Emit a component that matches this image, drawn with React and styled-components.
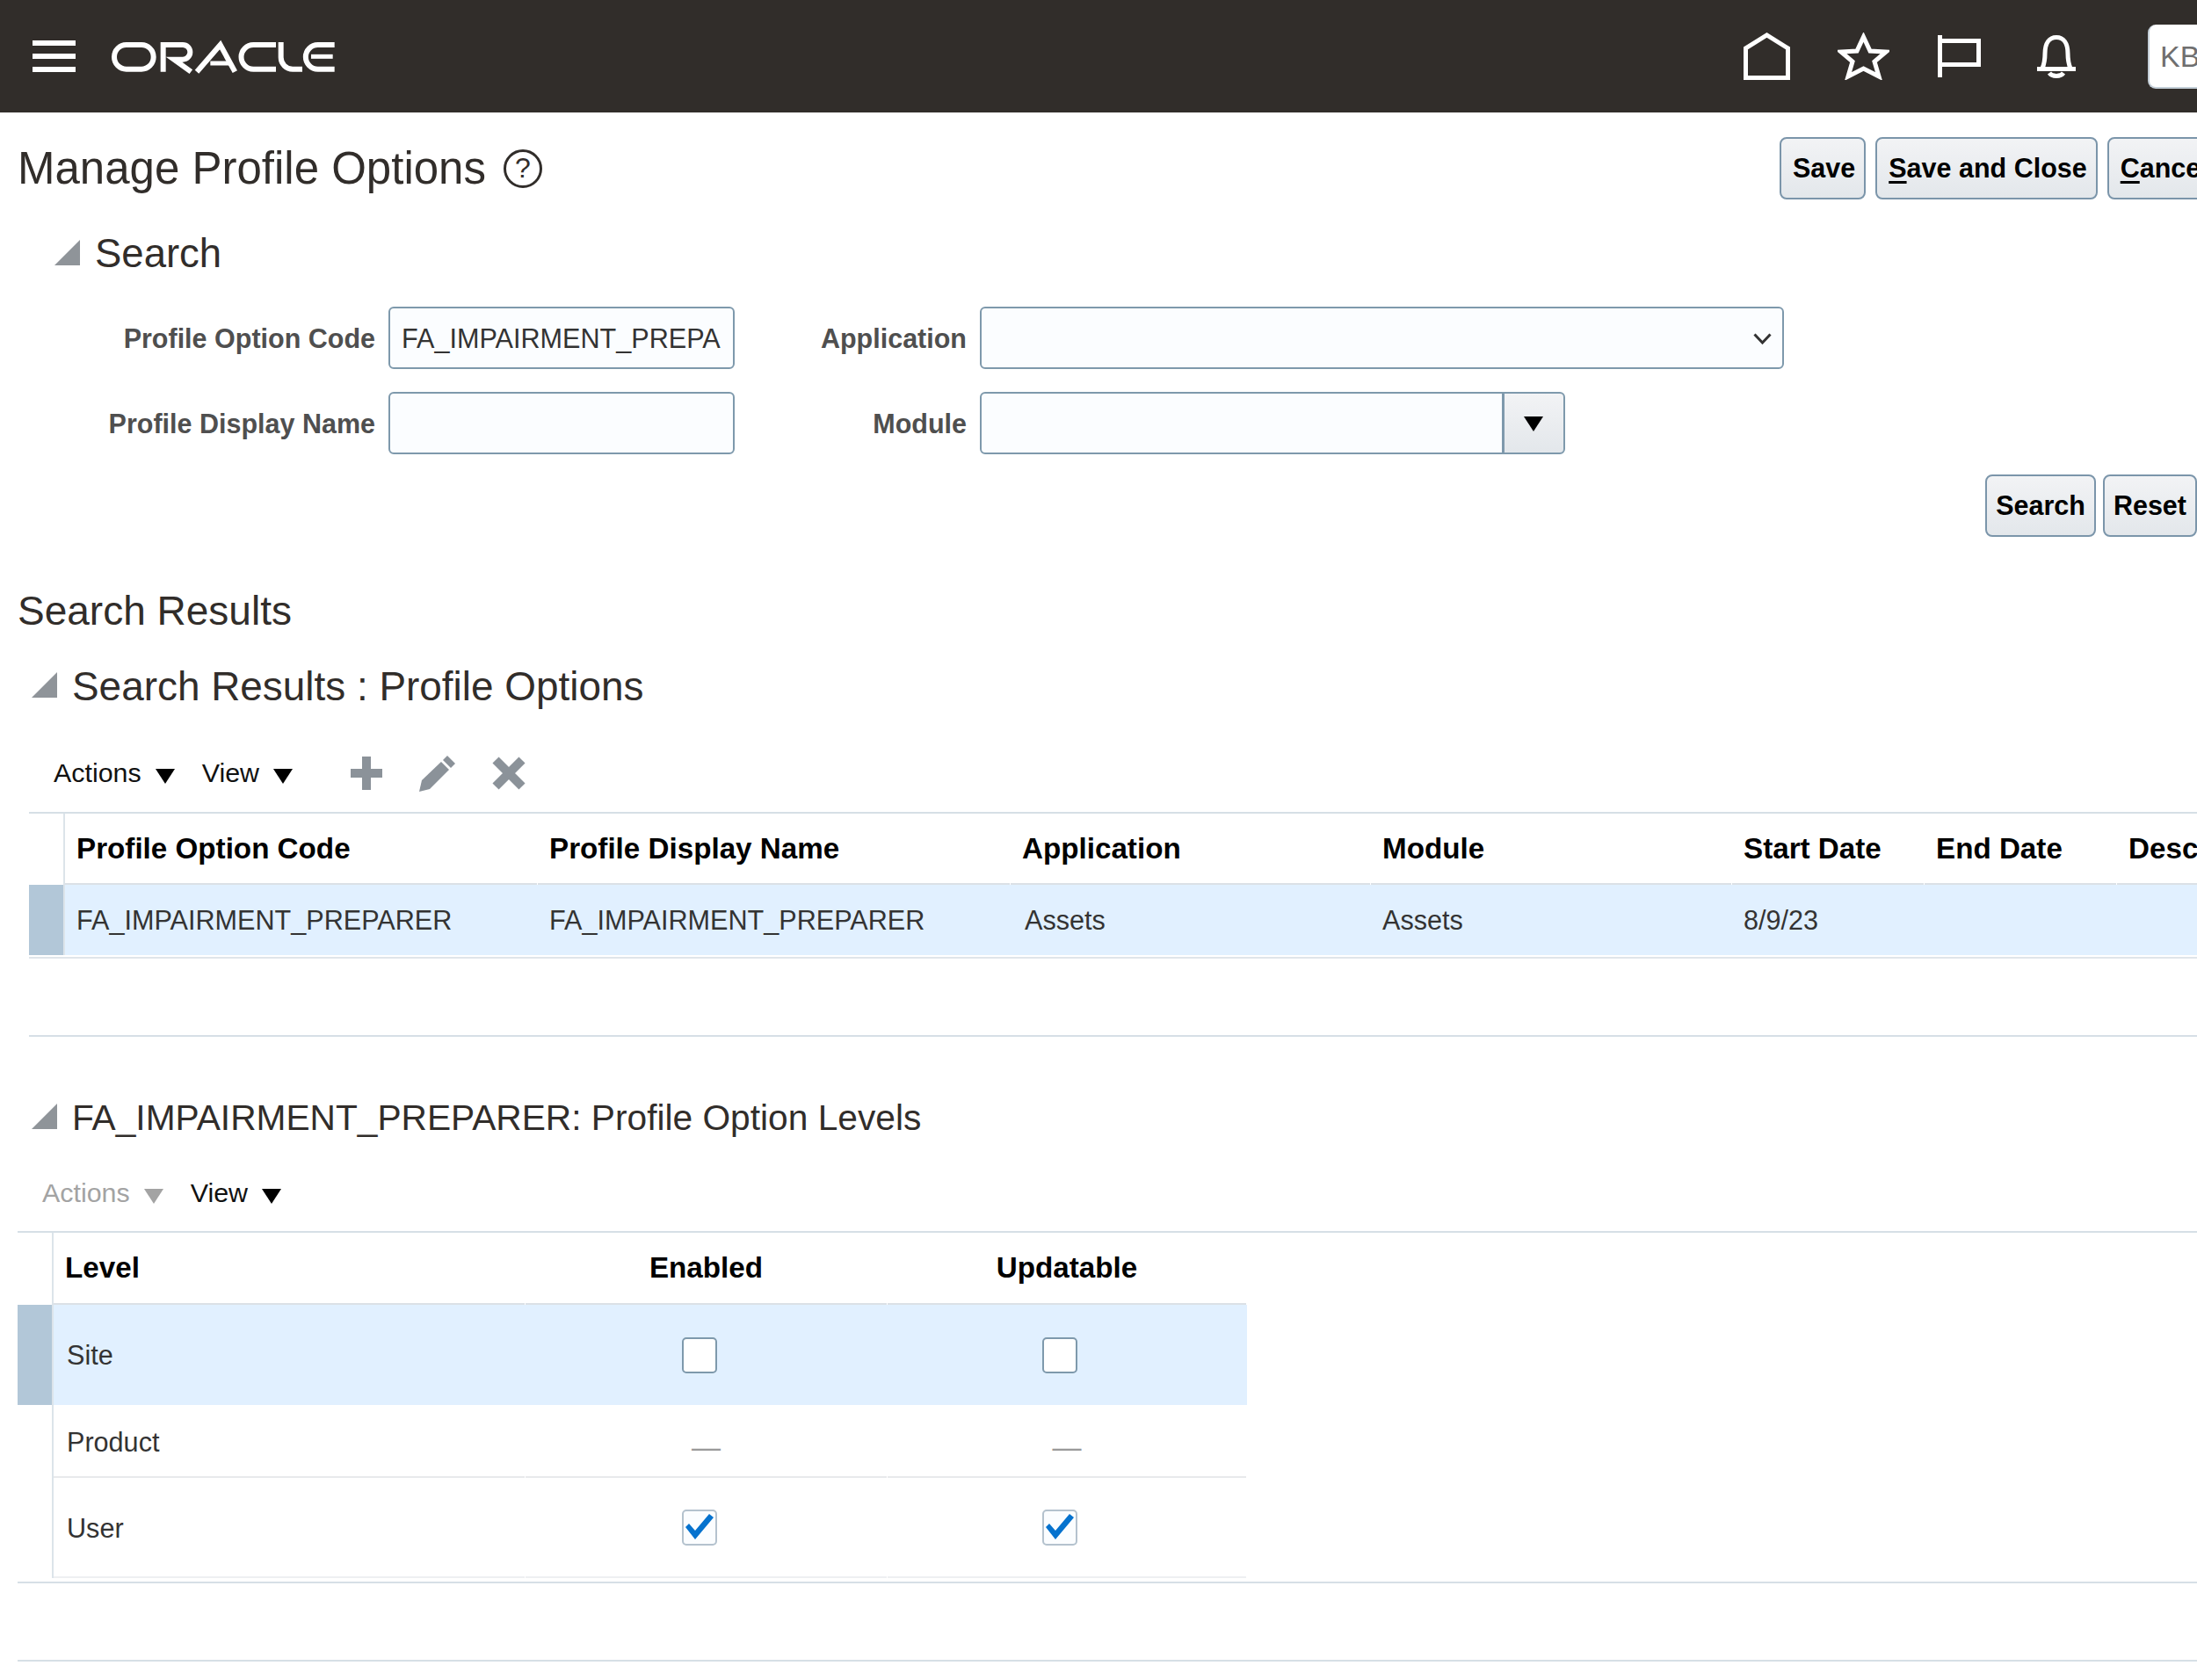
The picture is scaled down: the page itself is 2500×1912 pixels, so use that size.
import styled, { createGlobalStyle } from 'styled-components';

const GlobalStyle = createGlobalStyle`
  html, body {
    margin: 0;
    padding: 0;
    background: #ffffff;
  }
  * {
    box-sizing: border-box;
  }
`;

const Page = styled.div`
  width: 2500px;
  height: 1912px;
  overflow: hidden;
  font-family: "Liberation Sans", Arial, sans-serif;
  font-size: 30.6px;
  color: #333333;
`;

const TopBar = styled.header`
  height: 128px;
  background: #312d2a;
  display: flex;
  align-items: center;
  padding-left: 37px;
`;

const Hamburger = styled.div`
  width: 49px;
  height: 36px;
  margin-right: 34px;
  display: flex;
  flex-direction: column;
  justify-content: space-between;
  span {
    display: block;
    height: 6px;
    background: #ffffff;
  }
`;

const Logo = styled.svg`
  display: block;
  margin-top: 2px;
  fill: none;
  stroke: #ffffff;
  stroke-width: 18;
`;

const TopIcons = styled.nav`
  margin-left: auto;
  display: flex;
  align-items: center;
`;

const TopIcon = styled.svg`
  display: block;
  fill: none;
  stroke: #ffffff;
  stroke-width: 5;
  margin-right: ${(props) => props.$gap}px;
`;

const UserBadge = styled.div`
  width: 56px;
  height: 73px;
  background: #ffffff;
  border-radius: 9px 0 0 9px;
  border-bottom: 2px solid #c3ced7;
  border-left: 2px solid #c3ced7;
  padding-left: 12px;
  line-height: 72px;
  font-size: 34px;
  color: #6f6f6f;
  white-space: nowrap;
  overflow: hidden;
`;

const TitleRow = styled.div`
  margin-top: 28px;
  height: 71px;
  display: flex;
  align-items: center;
`;

const TitleBlock = styled.div`
  flex: 0 0 2025px;
  padding-left: 20px;
  display: flex;
  align-items: center;
`;

const PageTitle = styled.h1`
  margin: 0;
  font-size: 51px;
  line-height: 58px;
  font-weight: 400;
  color: #312d2a;
`;

const HelpMark = styled.span`
  width: 44px;
  height: 44px;
  margin-left: 20px;
  border: 3px solid #312d2a;
  border-radius: 50%;
  display: flex;
  align-items: center;
  justify-content: center;
  font-size: 32px;
  color: #312d2a;
`;

const ButtonGroup = styled.div`
  display: flex;
  gap: ${(props) => props.$gap}px;
  flex: none;
`;

const Button = styled.button`
  height: 71px;
  padding: 0 ${(props) => props.$pad || 10}px 0 ${(props) => props.$pad || 13}px;
  background: linear-gradient(#f2f3f5, #e3e7eb);
  border: 2px solid #7b95aa;
  border-radius: 8px;
  font-family: inherit;
  font-size: 30.5px;
  font-weight: 700;
  color: #000000;
  white-space: nowrap;
  flex: none;
  cursor: pointer;
  u {
    text-decoration-thickness: 3px;
    text-underline-offset: 4px;
  }
`;

const SectionHead = styled.div`
  display: flex;
  align-items: center;
  margin-top: ${(props) => props.$top}px;
  padding-left: ${(props) => props.$left}px;
  gap: 17px;
`;

const Disclosure = styled.svg`
  display: block;
  flex: none;
  fill: #8f9499;
  position: relative;
  top: -2px;
`;

const SectionTitle = styled.h2`
  margin: 0;
  font-size: ${(props) => props.$size}px;
  line-height: ${(props) => props.$line}px;
  font-weight: 400;
  color: #312d2a;
  white-space: nowrap;
`;

const FormGrid = styled.div`
  margin-top: 35px;
  display: grid;
  grid-template-columns: 427px 394px 249px auto;
  grid-auto-rows: 71px;
  column-gap: 15px;
  row-gap: 26px;
  align-items: center;
  justify-items: start;
`;

const Label = styled.label`
  justify-self: end;
  padding-top: 2px;
  font-weight: 700;
  font-size: 30.5px;
  color: #4f4f4f;
  white-space: nowrap;
`;

const TextInput = styled.input`
  width: ${(props) => props.$width}px;
  height: 71px;
  padding: 2px 13px 0;
  background: #fbfdff;
  border: 2px solid #7e99ac;
  border-radius: ${(props) => props.$radius || '6px'};
  font-family: inherit;
  font-size: 30.6px;
  color: #333333;
  outline: none;
`;

const SelectBox = styled.div`
  width: 915px;
  height: 71px;
  padding: 2px 12px 0 0;
  background: #fbfdff;
  border: 2px solid #7e99ac;
  border-radius: 6px;
  display: flex;
  align-items: center;
  justify-content: flex-end;
`;

const Combo = styled.div`
  display: flex;
`;

const ComboButton = styled.div`
  width: 70px;
  height: 71px;
  padding-right: 2px;
  background: linear-gradient(#f2f3f5, #e3e7eb);
  border: 2px solid #7e99ac;
  border-left-width: 1px;
  border-radius: 0 6px 6px 0;
  display: flex;
  align-items: center;
  justify-content: center;
`;

const SearchActions = styled.div`
  margin-top: 23px;
  display: flex;
  justify-content: flex-end;
`;

const Toolbar = styled.div`
  height: 46px;
  margin-top: ${(props) => props.$top}px;
  padding-left: ${(props) => props.$left}px;
  display: flex;
  align-items: center;
`;

const MenuItem = styled.span`
  display: flex;
  align-items: center;
  gap: 16px;
  margin-right: 31px;
  padding-bottom: 2px;
  font-size: 30.4px;
  color: ${(props) => (props.$disabled ? '#a3a3a3' : '#111111')};
`;

const Arrow = styled.svg`
  display: block;
  flex: none;
  fill: ${(props) => props.$color || '#000000'};
  position: relative;
  top: ${(props) => props.$shift || 4}px;
`;

const ToolIcon = styled.svg`
  display: block;
  flex: none;
  fill: #8b9299;
  stroke: #8b9299;
  margin-left: ${(props) => props.$gap}px;
`;

const Pane = styled.section`
  margin-left: ${(props) => props.$left}px;
  height: ${(props) => props.$height}px;
  margin-top: ${(props) => props.$top}px;
  border-top: 2px solid #d6dfe6;
  border-bottom: 2px solid #d6dfe6;
`;

const Row = styled.div`
  display: grid;
  grid-template-columns: ${(props) => props.$columns};
  height: ${(props) => props.$height}px;
  width: max-content;
  ${(props) => props.$selected && 'background: #e1f0ff;'}
  ${(props) => props.$ruled && `
    background-clip: content-box;
    padding-bottom: 2px;
    border-bottom: 2px solid #dfe5ea;
  `}
`;

const MarkerCell = styled.div`
  border-right: 2px solid #dce4ea;
  background: ${(props) => (props.$selected ? '#b2c7d8' : 'transparent')};
`;

const HeadCell = styled.div`
  padding: 0 13px;
  margin-right: 1px;
  display: flex;
  align-items: center;
  justify-content: ${(props) => (props.$center ? 'center' : 'flex-start')};
  font-size: 33.2px;
  font-weight: 700;
  color: #000000;
  white-space: nowrap;
  border-bottom: 2px solid #dbe1e6;
`;

const Cell = styled.div`
  padding-left: ${(props) => 13 + (props.$inset || 0)}px;
  margin-right: 1px;
  display: flex;
  align-items: center;
  justify-content: flex-start;
  white-space: nowrap;
  ${(props) => props.$rule && `
    padding-top: 3px;
    border-bottom: 2px solid ${props.$rule};
  `}
`;

const CheckCell = styled.div`
  padding-right: 16px;
  margin-right: 1px;
  display: flex;
  align-items: center;
  justify-content: center;
  ${(props) => props.$rule && `border-bottom: 2px solid ${props.$rule};`}
`;

const DashCell = styled.div`
  padding-top: 14px;
  margin-right: 1px;
  display: flex;
  align-items: center;
  justify-content: center;
  font-size: 33px;
  color: #999999;
  ${(props) => props.$rule && `border-bottom: 2px solid ${props.$rule};`}
`;

const CheckBox = styled.span`
  width: 40px;
  height: 41px;
  display: flex;
  align-items: center;
  justify-content: center;
  background: ${(props) => (props.$checked ? '#fbfdff' : '#ffffff')};
  border: 2px solid ${(props) => (props.$checked ? '#b4c2ce' : '#7e99ac')};
  border-radius: 5px;
`;

const FootRule = styled.div`
  margin-left: 20px;
  margin-top: 87px;
  height: 2px;
  background: #d6dfe6;
`;

const Triangle = () => (
  <Disclosure width="29" height="29" viewBox="0 0 29 29">
    <polygon points="29,0 29,29 0,29" />
  </Disclosure>
);

const DownArrow = ({ color, shift }) => (
  <Arrow width="22" height="17" viewBox="0 0 22 17" $color={color} $shift={shift}>
    <polygon points="0,0 22,0 11,17" />
  </Arrow>
);

const Tick = () => (
  <svg width="34" height="30" viewBox="0 0 34 30" fill="#0572ce">
    <polygon points="1,15 5,11 12,19 28,0 33,4 12,29" />
  </svg>
);

const OracleLogo = () => (
  <Logo width="270" height="50" viewBox="0 0 810 150">
    <rect x="30" y="33" width="134" height="83" rx="41" />
    <path d="M197 125 V33 H264 a25 25 0 0 1 0 50 H234 L292 125" />
    <path d="M312 125 L392 33 L442 125" />
    <path d="M358 96 H424" strokeWidth="15" />
    <path d="M582 33 H505 a41.5 41.5 0 0 0 0 83 H582" />
    <path d="M599 24 V76 a40 40 0 0 0 40 40 H672" />
    <path d="M782 33 H725 a41.5 41.5 0 0 0 0 83 H782" />
    <path d="M702 73 H776" strokeWidth="15" />
  </Logo>
);

const resultColumns = '41px 538px 538px 410px 411px 219px 219px 200px';
const levelColumns = '41px 537px 412px 409px';

const levels = [
  { name: 'Site', height: 114, selected: true, state: 'empty' },
  { name: 'Product', height: 83, rule: '#e8eaec', state: 'dash' },
  { name: 'User', height: 114, rule: '#eef0f2', state: 'checked' },
];

const LevelValue = ({ state, rule }) => {
  if (state === 'dash') return <DashCell $rule={rule}>—</DashCell>;
  return (
    <CheckCell $rule={rule}>
      <CheckBox $checked={state === 'checked'}>{state === 'checked' && <Tick />}</CheckBox>
    </CheckCell>
  );
};

const App = () => {
  return (
    <Page>
      <GlobalStyle />

      <TopBar>
        <Hamburger>
          <span />
          <span />
          <span />
        </Hamburger>
        <OracleLogo />
        <TopIcons>
          <TopIcon $gap={54} width="53" height="54" viewBox="0 0 53 54">
            <path d="M2.5 51.5 V18 L26.5 3 L50.5 18 V51.5 Z" />
          </TopIcon>
          <TopIcon $gap={55} width="59" height="54" viewBox="0 0 59 54">
            <polygon points="29.5,5 37,21 55,22 42,33 47,50 29.5,41 12,50 17,33 4,22 22,21" />
          </TopIcon>
          <TopIcon $gap={64} width="49" height="48" viewBox="0 0 49 48">
            <path d="M2.5 0 V48" />
            <path d="M3 6.5 H46.5 V33.5 H3" />
          </TopIcon>
          <TopIcon $gap={82} width="44" height="49" viewBox="0 0 44 49">
            <path d="M6 38 C8 33 9 29 9 21 C9 9 14 2.5 22 2.5 C30 2.5 35 9 35 21 C35 29 36 33 38 38" />
            <path d="M0 38.5 H44" />
            <path d="M14 43 C17 47.5 27 47.5 30 43" />
          </TopIcon>
          <UserBadge>KB</UserBadge>
        </TopIcons>
      </TopBar>

      <TitleRow>
        <TitleBlock>
          <PageTitle>Manage Profile Options</PageTitle>
          <HelpMark>?</HelpMark>
        </TitleBlock>
        <ButtonGroup $gap={11}>
          <Button>Save</Button>
          <Button>
            <u>S</u>ave and Close
          </Button>
          <Button>
            <u>C</u>ancel
          </Button>
        </ButtonGroup>
      </TitleRow>

      <SectionHead $top={37} $left={62}>
        <Triangle />
        <SectionTitle $size={45.5} $line={50}>Search</SectionTitle>
      </SectionHead>

      <FormGrid>
        <Label>Profile Option Code</Label>
        <TextInput $width={394} defaultValue="FA_IMPAIRMENT_PREPA" readOnly />
        <Label>Application</Label>
        <SelectBox>
          <svg width="21" height="13" viewBox="0 0 21 13" fill="none" stroke="#333333" strokeWidth="3">
            <polyline points="1.5,1.5 10.5,11 19.5,1.5" />
          </svg>
        </SelectBox>
        <Label>Profile Display Name</Label>
        <TextInput $width={394} readOnly />
        <Label>Module</Label>
        <Combo>
          <TextInput $width={596} $radius="6px 0 0 6px" readOnly />
          <ComboButton>
            <DownArrow shift={1} />
          </ComboButton>
        </Combo>
      </FormGrid>

      <SearchActions>
        <ButtonGroup $gap={8}>
          <Button $pad={10}>Search</Button>
          <Button $pad={10}>Reset</Button>
        </ButtonGroup>
      </SearchActions>

      <SectionHead $top={58} $left={20}>
        <SectionTitle $size={46} $line={52}>Search Results</SectionTitle>
      </SectionHead>

      <SectionHead $top={34} $left={36}>
        <Triangle />
        <SectionTitle $size={45.9} $line={52}>Search Results : Profile Options</SectionTitle>
      </SectionHead>

      <Toolbar $top={50} $left={61}>
        <MenuItem>
          Actions
          <DownArrow />
        </MenuItem>
        <MenuItem>
          View
          <DownArrow />
        </MenuItem>
        <ToolIcon $gap={35} width="36" height="38" viewBox="0 0 36 38" strokeWidth="0">
          <path d="M13 0 H23 V14 H36 V24 H23 V38 H13 V24 H0 V14 H13 Z" />
        </ToolIcon>
        <ToolIcon $gap={42} width="41" height="41" viewBox="0 0 41 41" strokeWidth="0">
          <path d="M0 41 L3 28 L25 7 L34 16 L12 38 Z" />
          <path d="M27 5 L32 0 L41 9 L36 14 Z" />
        </ToolIcon>
        <ToolIcon $gap={42} width="38" height="38" viewBox="0 0 38 38" strokeWidth="10" fill="none">
          <path d="M4 4 L34 34 M34 4 L4 34" />
        </ToolIcon>
      </Toolbar>

      <Pane $left={33} $height={256} $top={21}>
        <Row $columns={resultColumns} $height={81}>
          <MarkerCell />
          <HeadCell>Profile Option Code</HeadCell>
          <HeadCell>Profile Display Name</HeadCell>
          <HeadCell>Application</HeadCell>
          <HeadCell>Module</HeadCell>
          <HeadCell>Start Date</HeadCell>
          <HeadCell>End Date</HeadCell>
          <HeadCell>Description</HeadCell>
        </Row>
        <Row $columns={resultColumns} $height={84} $selected $ruled>
          <MarkerCell $selected />
          <Cell>FA_IMPAIRMENT_PREPARER</Cell>
          <Cell>FA_IMPAIRMENT_PREPARER</Cell>
          <Cell $inset={3}>Assets</Cell>
          <Cell>Assets</Cell>
          <Cell>8/9/23</Cell>
          <Cell />
          <Cell />
        </Row>
      </Pane>

      <SectionHead $top={69} $left={36}>
        <Triangle />
        <SectionTitle $size={40.7} $line={46}>FA_IMPAIRMENT_PREPARER: Profile Option Levels</SectionTitle>
      </SectionHead>

      <Toolbar $top={40} $left={48}>
        <MenuItem $disabled>
          Actions
          <DownArrow color="#a3a3a3" />
        </MenuItem>
        <MenuItem>
          View
          <DownArrow />
        </MenuItem>
      </Toolbar>

      <Pane $left={20} $height={401} $top={20}>
        <Row $columns={levelColumns} $height={82}>
          <MarkerCell />
          <HeadCell>Level</HeadCell>
          <HeadCell $center>Enabled</HeadCell>
          <HeadCell $center>Updatable</HeadCell>
        </Row>
        {levels.map((level) => (
          <Row key={level.name} $columns={levelColumns} $height={level.height} $selected={level.selected}>
            <MarkerCell $selected={level.selected} />
            <Cell $inset={2} $rule={level.rule}>{level.name}</Cell>
            <LevelValue state={level.state} rule={level.rule} />
            <LevelValue state={level.state} rule={level.rule} />
          </Row>
        ))}
      </Pane>

      <FootRule />
    </Page>
  );
};

export default App;
